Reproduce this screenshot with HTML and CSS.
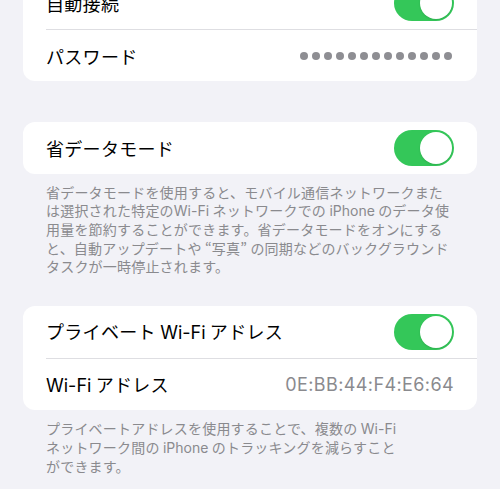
FILE: index.html
```html
<!DOCTYPE html>
<html lang="ja">
<head>
<meta charset="utf-8">
<link rel="stylesheet" href="styles.css">
</head>
<body>
<div class="page">
  <section class="card first">
    <div class="row">
      <span class="label">自動接続</span>
      <span class="toggle"><span class="knob"></span></span>
    </div>
    <div class="row">
      <span class="label">パスワード</span>
      <span class="dots">
        <i></i><i></i><i></i><i></i><i></i><i></i><i></i><i></i><i></i><i></i><i></i><i></i><i></i>
      </span>
    </div>
  </section>

  <section class="card second">
    <div class="row">
      <span class="label">省データモード</span>
      <span class="toggle"><span class="knob"></span></span>
    </div>
  </section>
  <p class="note">省データモードを使用すると、モバイル通信ネットワークまた<br>は選択された特定の<span class="lat">Wi-Fi</span> ネットワークでの <span class="lat">iPhone</span> のデータ使<br>用量を節約することができます。省データモードをオンにする<br>と、自動アップデートや “写真” の同期などのバックグラウンド<br>タスクが一時停止されます。</p>

  <section class="card third">
    <div class="row">
      <span class="label">プライベート <span class="lat">Wi-Fi</span> アドレス</span>
      <span class="toggle"><span class="knob"></span></span>
    </div>
    <div class="row">
      <span class="label"><span class="lat">Wi-Fi</span> アドレス</span>
      <span class="value">0E:BB:44:F4:E6:64</span>
    </div>
  </section>
  <p class="note">プライベートアドレスを使用することで、複数の <span class="lat">Wi-Fi</span><br>ネットワーク間の <span class="lat">iPhone</span> のトラッキングを減らすこと<br>ができます。</p>
</div>
</body>
</html>
```

FILE: styles.css
```css
html, body {
  margin: 0;
  padding: 0;
  background: #f2f2f7;
}
body {
  width: 500px;
  height: 489px;
  overflow: hidden;
  font-family: "Noto Sans CJK JP", "Noto Sans", sans-serif;
  color: #000;
}
.page {
  display: flex;
  flex-direction: column;
  padding: 0 23px;
}
.card {
  background: #fff;
  border-radius: 12px;
  overflow: hidden;
}
.first {
  margin-top: -23px;
}
.second {
  margin-top: 41px;
}
.third {
  margin-top: 31px;
}
.row {
  height: 52px;
  margin-left: 23px;
  padding-right: 23px;
  display: flex;
  align-items: center;
  justify-content: space-between;
  box-sizing: border-box;
}
.row + .row {
  border-top: 1px solid #dedee2;
}
.label {
  font-size: 18px;
  letter-spacing: 0.3px;
  line-height: 1;
}
.lat {
  font-family: "Inter", "Noto Sans", sans-serif;
  letter-spacing: 0;
}
.toggle {
  width: 60px;
  height: 36px;
  border-radius: 18px;
  background: #34c759;
  display: flex;
  align-items: center;
  justify-content: flex-end;
  padding: 0 2px;
  box-sizing: border-box;
}
.knob {
  width: 32px;
  height: 32px;
  border-radius: 50%;
  background: #fff;
  box-shadow: 0 1px 2px rgba(0,0,0,0.12);
}
.dots {
  display: flex;
  gap: 4px;
  margin-right: 2px;
}
.dots i {
  width: 8px;
  height: 8px;
  border-radius: 50%;
  background: #8e8e93;
}
.value {
  font-family: "Inter", "Noto Sans", sans-serif;
  font-size: 18px;
  color: #8a8a8e;
  letter-spacing: 0.4px;
}
.note {
  margin: 0;
  padding: 9px 23px 0;
  font-size: 14px;
  line-height: 18.2px;
  letter-spacing: 0.2px;
  color: #8a8a8e;
  white-space: nowrap;
}
.note .lat {
  font-size: 14px;
}
```
